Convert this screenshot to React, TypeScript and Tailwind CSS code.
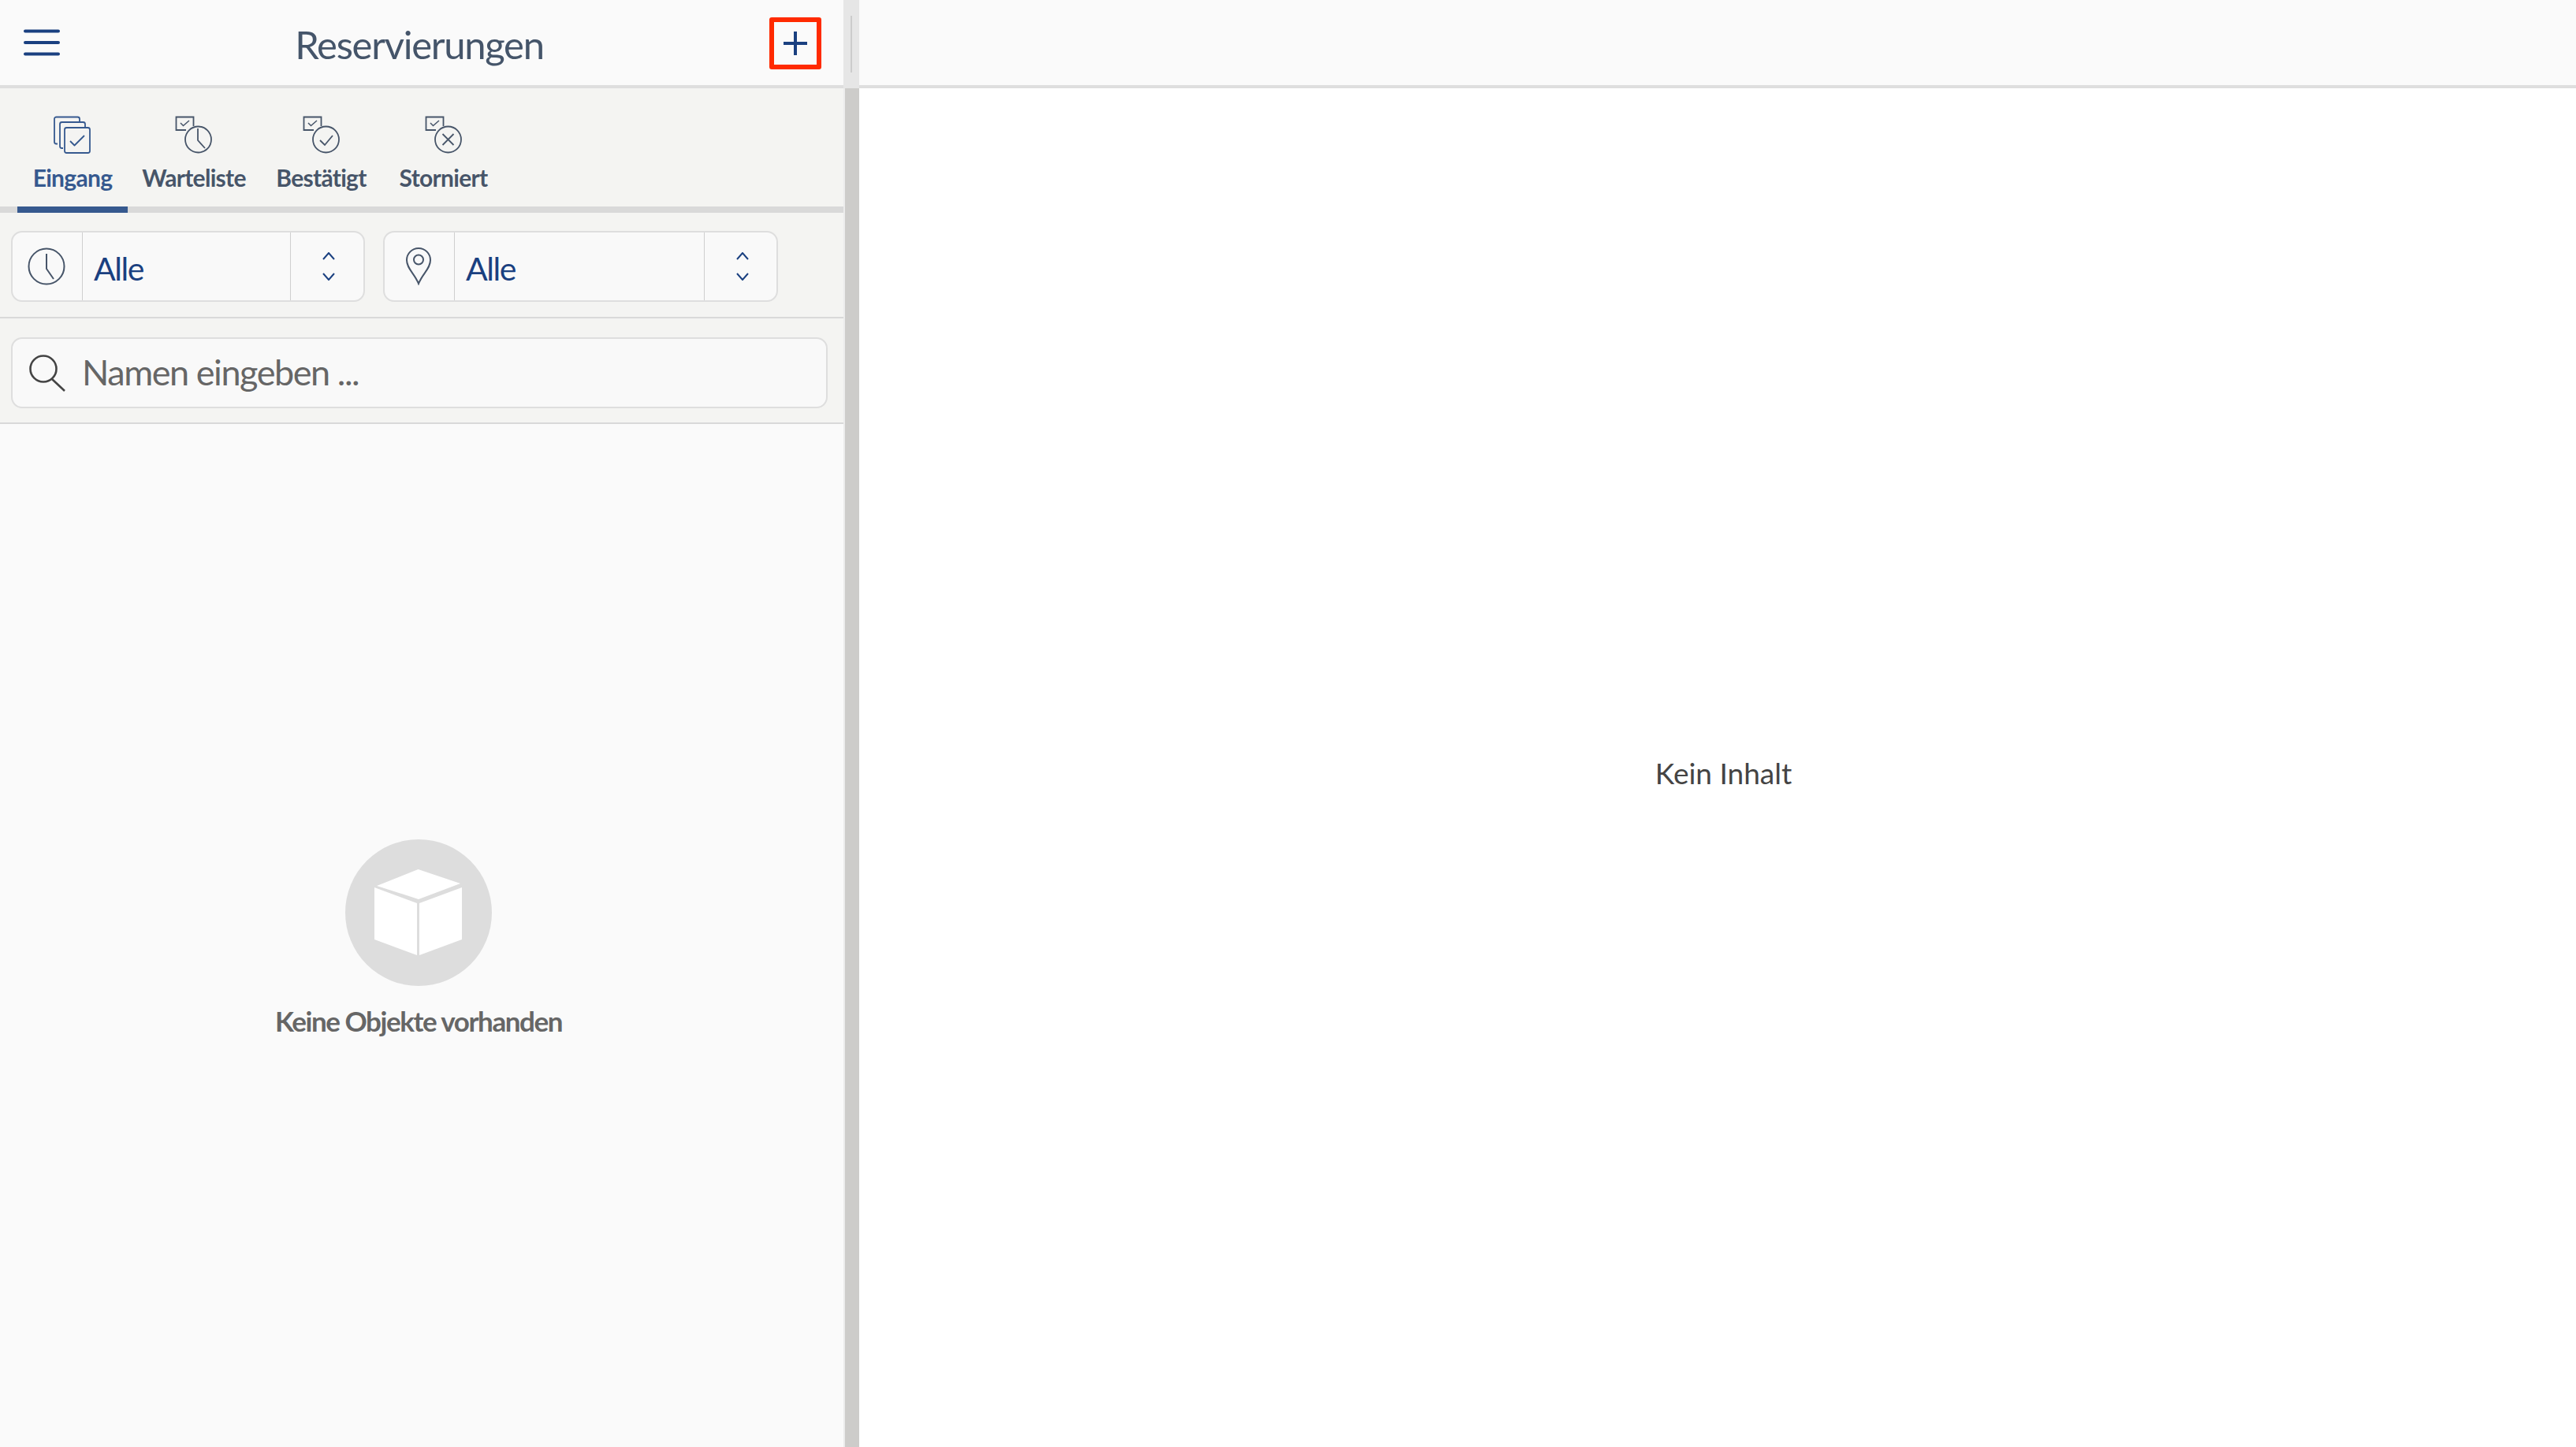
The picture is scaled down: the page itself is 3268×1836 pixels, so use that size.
import React from "react";

const font = "[font-family:'Lato','Liberation_Sans',sans-serif]";

function Hamburger() {
  return (
    <svg width="46" height="34" viewBox="0 0 46 34" fill="none" stroke="#1a4080" strokeWidth="4" strokeLinecap="round">
      <path d="M2 2.5H44M2 17H44M2 31.5H44" />
    </svg>
  );
}

function Plus() {
  return (
    <svg width="30" height="30" viewBox="0 0 30 30" fill="none" stroke="#1a4080" strokeWidth="4">
      <path d="M0 15H30M15 0V30" />
    </svg>
  );
}

function TabIcon({ kind, color }: { kind: "stack" | "clock" | "check" | "x"; color: string }) {
  if (kind === "stack") {
    return (
      <svg width="48" height="48" viewBox="0 0 48 48" fill="none" stroke={color} strokeWidth="1.8" strokeLinejoin="round">
        <path d="M5 35.5H3.5a2.5 2.5 0 0 1-2.5-2.5V4a2.5 2.5 0 0 1 2.5-2.5h27A2.5 2.5 0 0 1 33 4v4" />
        <path d="M12 41H10.5A2.5 2.5 0 0 1 8 38.5V10.5A2.5 2.5 0 0 1 10.5 8h27a2.5 2.5 0 0 1 2.5 2.5V15" />
        <rect x="14" y="15" width="32" height="32" rx="2.5" />
        <path d="M21 32l5.5 5.5L39 25" />
      </svg>
    );
  }
  return (
    <svg width="48" height="48" viewBox="0 0 48 48" fill="none" stroke={color} strokeWidth="1.8">
      <path d="M14 18H1.5V1.5H23.5V13" />
      <path d="M7 9l3.5 3.5L18 6" strokeWidth="1.5" />
      <circle cx="29.5" cy="30" r="16.5" />
      {kind === "clock" && <path d="M29 16v15l9 10" />}
      {kind === "check" && <path d="M22 31l6 6 10-12" />}
      {kind === "x" && <path d="M22.5 23l14 14M36.5 23l-14 14" />}
    </svg>
  );
}

function Tab({ label, kind, width, active }: { label: string; kind: "stack" | "clock" | "check" | "x"; width: string; active?: boolean }) {
  const color = active ? "#36598f" : "#475569";
  return (
    <div className={`flex flex-col items-center ${width} h-[158px] pt-[35px] border-b-[8px] font-bold ${active ? "border-[#36598f] text-[#36598f]" : "border-transparent text-[#475569]"}`}>
      <div className="h-[48px]">
        <TabIcon kind={kind} color={color} />
      </div>
      <span className="mt-[10px] text-[30px] leading-[40px] tracking-[-0.7px] whitespace-nowrap">{label}</span>
    </div>
  );
}

function UpDown() {
  return (
    <svg width="18" height="36" viewBox="0 0 18 36" fill="none" stroke="#1a4080" strokeWidth="2">
      <path d="M2 9L9 1L16 9M2 27L9 35L16 27" />
    </svg>
  );
}

function SelectBox({ icon, width, middle }: { icon: React.ReactNode; width: string; middle: string }) {
  return (
    <div className={`flex h-[90px] ${width} rounded-[14px] border-2 border-[#dedede] bg-[#f9f9f9]`}>
      <div className="w-[89px] flex items-center justify-center pr-[2px] border-r border-[#cfcfcf]">{icon}</div>
      <div className={`${middle} pl-[14px] pt-[6px] flex items-center border-r border-[#cfcfcf] text-[41px] text-[#1a4080] tracking-[-1.4px]`}>Alle</div>
      <div className="flex-1 flex items-center justify-center pl-[4px]"><UpDown /></div>
    </div>
  );
}

export default function App() {
  return (
    <div className={`flex h-screen w-full bg-white ${font}`}>
      <div className="w-[1070px] flex flex-col bg-[#fafafa]">
        <div className="h-[112px] shrink-0 flex items-center pl-[30px] pr-[28px] border-b-4 border-[#dedede]">
          <Hamburger />
          <span className="flex-1 text-center pl-[12px] pt-[6px] text-[49px] text-[#45556a] tracking-[-1.3px]">Reservierungen</span>
          <div className="w-[66px] h-[66px] mt-[2px] flex items-center justify-center border-[6px] border-[#ff2a00] rounded-[3px]"><Plus /></div>
        </div>
        <div className="flex shrink-0 h-[158px] pl-[22px] bg-[#f4f4f2] relative after:absolute after:left-0 after:right-0 after:bottom-0 after:h-[8px] after:bg-[#d9d9d9]">
          <div className="relative z-10 flex">
            <Tab label="Eingang" kind="stack" width="w-[140px]" active />
            <Tab label="Warteliste" kind="clock" width="w-[168px]" />
            <Tab label="Bestätigt" kind="check" width="w-[155px]" />
            <Tab label="Storniert" kind="x" width="w-[155px]" />
          </div>
        </div>
        <div className="flex shrink-0 gap-[23px] h-[134px] pt-[23px] pl-[14px] bg-[#f4f4f2] border-b-2 border-[#d9d9d9]">
          <SelectBox width="w-[449px]" middle="w-[264px]" icon={
            <svg width="48" height="48" viewBox="0 0 48 48" fill="none" stroke="#475569" strokeWidth="2">
              <circle cx="24" cy="24" r="22.5" />
              <path d="M24 8V27L33 40" />
            </svg>
          } />
          <SelectBox width="w-[501px]" middle="w-[317px]" icon={
            <svg width="34" height="48" viewBox="0 0 34 48" fill="none" stroke="#475569" strokeWidth="2">
              <path d="M17 46C12 33 2 27 2 16a15 15 0 0 1 30 0C32 27 22 33 17 46Z" />
              <circle cx="17" cy="15.5" r="6" />
            </svg>
          } />
        </div>
        <div className="shrink-0 h-[134px] pt-[24px] pl-[14px] pr-[20px] bg-[#f4f4f2] border-b-2 border-[#d9d9d9]">
          <div className="flex items-center h-[90px] rounded-[14px] border-2 border-[#dedede] bg-[#f9f9f9] pl-[20px]">
            <svg width="48" height="48" viewBox="0 0 48 48" fill="none" stroke="#444444" strokeWidth="2.6" className="shrink-0">
              <circle cx="19" cy="19" r="16.5" />
              <path d="M30 32L46 47" />
            </svg>
            <span className="ml-[20px] text-[45px] text-[#666666] tracking-[-1.45px]">Namen eingeben ...</span>
          </div>
        </div>
        <div className="flex-1 flex flex-col items-center pt-[527px] pr-[8px]">
          <div className="w-[186px] h-[186px] rounded-full bg-[#dddddd] flex items-center justify-center">
            <svg width="112" height="112" viewBox="0 0 112 112" fill="#ffffff">
              <path d="M3 22L55.5 1L109 19L56 39Z" />
              <path d="M0 24L54 44V110L0 90Z" />
              <path d="M111 24L57 44V110L111 90Z" />
            </svg>
          </div>
          <span className="mt-[18px] text-[35px] font-bold text-[#666666] tracking-[-1.45px]">Keine Objekte vorhanden</span>
        </div>
      </div>
      <div className="w-[20px] shrink-0 flex flex-col">
        <div className="h-[112px] bg-[#e6e6e6] flex justify-center pt-[20px]">
          <div className="w-[2px] h-[72px] bg-[#cccccc]" />
        </div>
        <div className="flex-1 bg-[#cdccca] border-l-2 border-[#ececec]" />
      </div>
      <div className="flex-1 flex flex-col">
        <div className="h-[112px] shrink-0 bg-[#fafafa] border-b-4 border-[#dedede]" />
        <div className="flex-1 flex items-center justify-center pt-[14px] pl-[15px]">
          <span className="text-[37px] text-[#444444]">Kein Inhalt</span>
        </div>
      </div>
    </div>
  );
}
